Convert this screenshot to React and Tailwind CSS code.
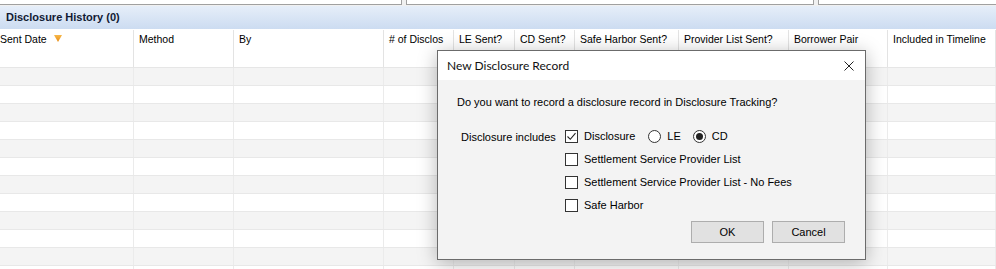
import React from "react";

const cols = [
  { label: "Sent Date", w: "w-[134px]", first: true },
  { label: "Method", w: "w-[100px]" },
  { label: "By", w: "w-[150px]" },
  { label: "# of Disclos", w: "w-[70px]" },
  { label: "LE Sent?", w: "w-[61px]" },
  { label: "CD Sent?", w: "w-[60px]" },
  { label: "Safe Harbor Sent?", w: "w-[104px]" },
  { label: "Provider List Sent?", w: "w-[110px]" },
  { label: "Borrower Pair", w: "w-[99px]" },
  { label: "Included in Timeline", w: "flex-1" },
];

const rows = Array.from({ length: 12 }, (_, i) => i);

function SortArrow() {
  return (
    <svg width="8" height="7" viewBox="0 0 8 7" className="ml-[7px] mt-[2px] inline-block">
      <defs>
        <linearGradient id="sa" x1="0" y1="0" x2="0" y2="1">
          <stop offset="0" stopColor="#f7b84a" />
          <stop offset="1" stopColor="#e88a10" />
        </linearGradient>
      </defs>
      <polygon points="0,0 8,0 4,7" fill="url(#sa)" />
    </svg>
  );
}

function Check({ checked }) {
  return (
    <span className="w-[13px] h-[13px] border border-[#333] bg-white flex items-center justify-center shrink-0">
      {checked && (
        <svg width="11" height="11" viewBox="0 0 11 11">
          <path d="M1.5 5.5 L4.3 8.3 L9.5 2.2" stroke="#222" strokeWidth="1.1" fill="none" />
        </svg>
      )}
    </span>
  );
}

function Radio({ on }) {
  return (
    <span className="w-[13px] h-[13px] rounded-full border border-[#333] bg-white flex items-center justify-center shrink-0">
      {on && <span className="w-[7px] h-[7px] rounded-full bg-[#222]" />}
    </span>
  );
}

export default function App() {
  return (
    <div className="relative w-[996px] h-[269px] overflow-hidden bg-white text-black font-['Liberation_Sans',Arial,sans-serif]">
      {/* top strip */}
      <div className="flex h-[6px] bg-[#f0f0f0]">
        <div className="w-[402px] h-[5px] bg-white border-b border-r border-[#a0a0a0]" />
        <div className="w-[4px]" />
        <div className="w-[408px] h-[5px] bg-white border-b border-r border-l border-[#a0a0a0]" />
        <div className="w-[4px]" />
        <div className="flex-1 h-[5px] bg-white border-b border-l border-[#a0a0a0]" />
      </div>

      {/* section header */}
      <div className="h-[24px] border-b border-white bg-gradient-to-b from-[#e6eef9] to-[#ccdcf1] flex items-center pl-[6px]">
        <span className="text-[11px] font-bold text-[#111a33]">Disclosure History (0)</span>
      </div>

      {/* column headers */}
      <div className="flex h-[38px] border-b border-[#e6e6e6]">
        {cols.map((c) => (
          <div
            key={c.label}
            className={`${c.w} border-r border-[#e3e3e3] pt-[3px] text-[10.5px] leading-[13px] whitespace-nowrap overflow-hidden flex items-start ${c.first ? "pl-0" : "pl-[5px]"}`}
          >
            <span>{c.label}</span>
            {c.first && <SortArrow />}
          </div>
        ))}
      </div>

      {/* rows */}
      {rows.map((r) => (
        <div key={r} className={`flex h-[18px] border-b border-[#e8e8e8] ${r % 2 === 0 ? "bg-[#f4f4f4]" : "bg-white"}`}>
          {cols.map((c) => (
            <div key={c.label} className={`${c.w} border-r border-[#ebebeb]`} />
          ))}
        </div>
      ))}

      {/* dialog */}
      <div className="absolute left-[437px] top-[50px] w-[429px] h-[210px] border border-[#6b6b6b] bg-[#f3f3f3] shadow-[0_3px_18px_rgba(0,0,0,0.28)] flex flex-col">
        <div className="h-[29px] bg-white flex items-center justify-between pl-[9px] pr-[11px]">
          <span className="text-[12px] font-['Lato','Noto_Sans',sans-serif] text-[#111]">New Disclosure Record</span>
          <svg width="10" height="10" viewBox="0 0 10 10">
            <path d="M0.5 0.5 L9.5 9.5 M9.5 0.5 L0.5 9.5" stroke="#222" strokeWidth="1" />
          </svg>
        </div>
        <div className="flex-1 text-[11px] leading-[13px]">
          <div className="pl-[19px] pt-[16px]">Do you want to record a disclosure record in Disclosure Tracking?</div>
          <div className="flex pl-[23px] pt-[21px]">
            <div className="w-[104px] pt-[1px]">Disclosure includes</div>
            <div className="flex flex-col gap-[10px]">
              <div className="flex items-center">
                <Check checked />
                <span className="ml-[6px]">Disclosure</span>
                <span className="ml-[13px]"><Radio /></span>
                <span className="ml-[6px]">LE</span>
                <span className="ml-[12px]"><Radio on /></span>
                <span className="ml-[6px]">CD</span>
              </div>
              <div className="flex items-center">
                <Check />
                <span className="ml-[6px]">Settlement Service Provider List</span>
              </div>
              <div className="flex items-center">
                <Check />
                <span className="ml-[6px]">Settlement Service Provider List - No Fees</span>
              </div>
              <div className="flex items-center">
                <Check />
                <span className="ml-[6px]">Safe Harbor</span>
              </div>
            </div>
          </div>
          <div className="flex justify-end gap-[8px] pr-[20px] pt-[9px]">
            <button className="w-[73px] h-[22px] bg-[#e1e1e1] border border-[#adadad] text-[11px]">OK</button>
            <button className="w-[73px] h-[22px] bg-[#e1e1e1] border border-[#adadad] text-[11px]">Cancel</button>
          </div>
        </div>
      </div>
    </div>
  );
}
